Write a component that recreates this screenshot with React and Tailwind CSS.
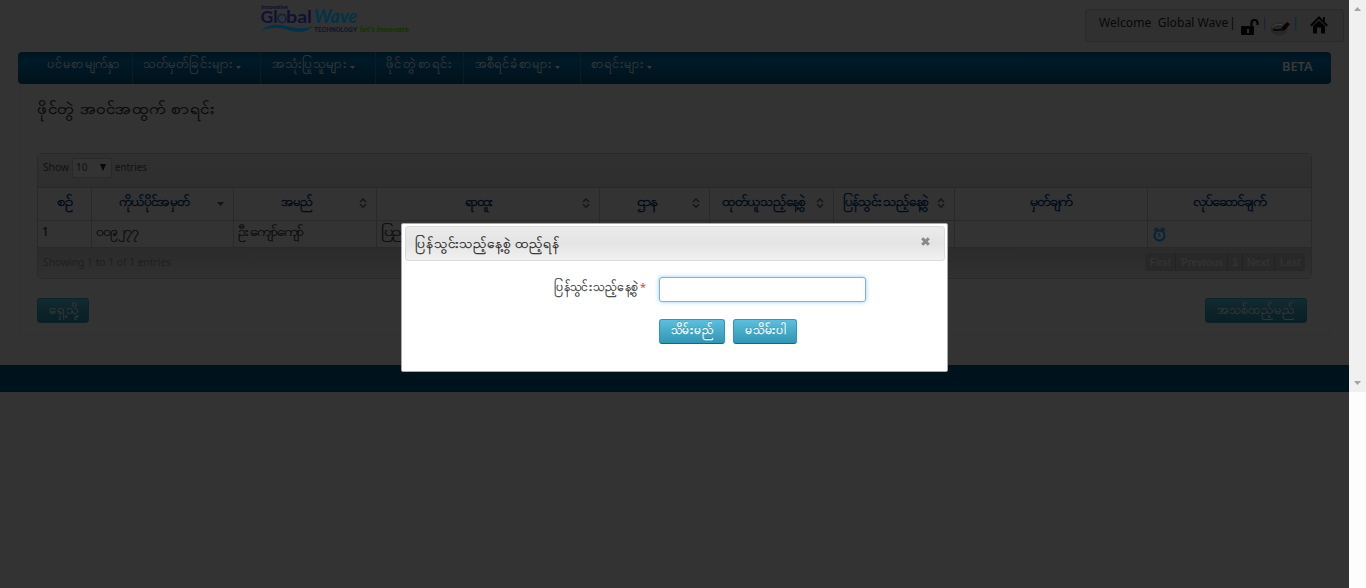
import React from "react";

function My({ w, className = "", children }) {
  const ref = React.useRef(null);
  const [s, setS] = React.useState(1);
  React.useLayoutEffect(() => {
    if (ref.current.offsetWidth) setS(w / ref.current.offsetWidth);
  }, [w]);
  return (
    <span className={"inline-block whitespace-nowrap text-left " + className} style={{ width: w }}>
      <span ref={ref} className="inline-block origin-left" style={{ transform: `scaleX(${s})` }}>
        {children}
      </span>
    </span>
  );
}

const menu = [
  { label: "ပင်မစာမျက်နှာ", cell: "w-[115px] pl-[29px]", w: 73 },
  { label: "သတ်မှတ်ခြင်းများ", cell: "w-[128px] pl-[10px]", w: 90, caret: true },
  { label: "အသုံးပြုသူများ", cell: "w-[115px] pl-[11px]", w: 75, caret: true },
  { label: "ဖိုင်တွဲ စာရင်း", cell: "w-[88px] pl-[10px]", w: 66 },
  { label: "အစီရင်ခံစာများ", cell: "w-[117px] pl-[11px]", w: 77, caret: true },
  { label: "စာရင်းများ", cell: "pl-[10px]", w: 53, caret: true },
];

const columns = [
  { label: "စဉ်", w: 15 },
  { label: "ကိုယ်ပိုင်အမှတ်", w: 70, sort: "down" },
  { label: "အမည်", w: 31, sort: "both" },
  { label: "ရာထူး", w: 29, sort: "both" },
  { label: "ဌာန", w: 19, sort: "both" },
  { label: "ထုတ်ယူသည့်နေ့စွဲ", w: 83, sort: "both" },
  { label: "ပြန်သွင်းသည့်နေ့စွဲ", w: 85, sort: "both" },
  { label: "မှတ်ချက်", w: 42 },
  { label: "လုပ်ဆောင်ချက်", w: 73 },
];

const grid = "grid grid-cols-[54px_142px_143px_223px_110px_124px_121px_193px_1fr]";

function SortIcon({ kind }) {
  if (kind === "down")
    return (
      <svg className="w-[7px] h-[4px] mt-[4px]" viewBox="0 0 7 4"><path d="M0 0h7L3.5 4z" fill="#131313" /></svg>
    );
  return (
    <svg className="w-[8px] h-[10px]" viewBox="0 0 8 10" fill="none" stroke="#171717" strokeWidth="1.5">
      <path d="M1 4L4 1l3 3M1 6.200l3 3 3-3" />
    </svg>
  );
}

function Logo() {
  return (
    <svg className="w-[160px] h-[34px] ml-[255px]" viewBox="0 0 160 34">
      <text x="6" y="9" fontSize="5" fontWeight="700" fontFamily="Roboto, sans-serif" fill="#10102c" textLength="27" lengthAdjust="spacingAndGlyphs">Innovative</text>
      <g fontFamily="Lato, sans-serif" fontWeight="700" fontSize="17" fill="#101033">
        <text x="5.500" y="23" textLength="17" lengthAdjust="spacingAndGlyphs">Gl</text>
        <text x="31" y="23" textLength="26" lengthAdjust="spacingAndGlyphs">bal</text>
      </g>
      <circle cx="27" cy="18.500" r="4" fill="none" stroke="#17203c" strokeWidth="1.800" />
      <path d="M28 15c-3 2-1 5 0 7" stroke="#104058" fill="none" />
      <text x="59" y="23" fontFamily="Lato, sans-serif" fontWeight="700" fontStyle="italic" fontSize="18" fill="#003349" textLength="43" lengthAdjust="spacingAndGlyphs">Wave</text>
      <path d="M6 31C16 22 26 25 36 27S53 29 58 25C54 33 42 33 33 30S15 27 6 31z" fill="#003349" />
      <text x="59" y="31.500" fontFamily="Roboto, sans-serif" fontWeight="500" fontSize="6.500" fill="#10102c" textLength="43" lengthAdjust="spacingAndGlyphs">TECHNOLOGY</text>
      <text x="105" y="31.500" fontFamily="Lato, sans-serif" fontWeight="900" fontStyle="italic" fontSize="7.500" fill="#153300" textLength="49" lengthAdjust="spacingAndGlyphs">let’s innovate</text>
    </svg>
  );
}

function Header() {
  return (
    <header className="flex h-[52px] justify-between">
      <Logo />
      <div className="mt-[9px] mr-[5px] flex h-[33px] w-[259px] rounded-[3px] border border-[#2a2a2a] bg-[#303030] pl-[13px] text-[12.5px] leading-[26px] text-[#080808]">
        <My w={129}>Welcome&nbsp; Global Wave</My>
        <span className="ml-[1px] w-[7px]">|</span>
        <svg className="mt-[8px] ml-[4px] h-[18px] w-[19px] shrink-0" viewBox="0 0 19 18">
          <path d="M11.500 9V5a3 3 0 0 1 6 0v2" fill="none" stroke="#030303" strokeWidth="2.200" />
          <rect x="1" y="8" width="13" height="9" rx="1" fill="#030303" />
          <path d="M7 11h2v4H7z" fill="#303030" />
        </svg>
        <span className="ml-[2px] w-[6px] text-[#17203a]">|</span>
        <svg className="mt-[9px] ml-[3px] h-[18px] w-[20px] shrink-0" viewBox="0 0 20 18">
          <ellipse cx="9" cy="10" rx="8.500" ry="6.500" fill="#272727" />
          <path d="M2 8q6-5 12-1" stroke="#444" fill="none" />
          <path d="M3 10.500c3 1 5 1 8 0" fill="none" stroke="#050505" strokeWidth="1.800" />
          <path d="M11 12l1-4 5-5 3 2-5 6z" fill="#050505" />
        </svg>
        <span className="ml-[2px] w-[6px] text-[#002c40]">|</span>
        <svg className="mt-[6px] ml-[12px] h-[18px] w-[18px] shrink-0" viewBox="0 0 18 18">
          <path d="M9 0l4 4V1h2v5l3 3-1.500 1.500L9 3 1.500 10.500 0 9z" fill="#030303" />
          <path d="M9 4.500l6 5.500v7.500h-4v-6H7v6H3V10z" fill="#030303" />
        </svg>
      </div>
    </header>
  );
}

function Nav() {
  return (
    <nav className="ml-[18px] flex h-[32px] w-[1313px] rounded-[4px] bg-linear-to-b from-[#00141f] via-[#001a27] via-30% to-[#00121b] text-[12.500px] text-[#383838] [-webkit-text-stroke:0.2px_#383838]">
      {menu.map((m, i) => (
        <div key={m.label} className={"flex h-8 leading-[24px] " + m.cell + (i < 5 ? " border-r border-[#0d1c20]" : "")}>
          <My w={m.w}>{m.label}</My>
          {m.caret && <svg className="mt-[14px] ml-[3px] h-[3px] w-[5px]" viewBox="0 0 5 3"><path d="M0 0h5L2.500 3z" fill="#383838" /></svg>}
        </div>
      ))}
      <span className="mt-[2px] mr-[18px] ml-auto text-[12px] leading-[26px] font-semibold [-webkit-text-stroke:0]"><My w={31}>BETA</My></span>
    </nav>
  );
}

function DataTable() {
  return (
    <div className="mt-[32px] w-[1275px] rounded-[5px] border border-[#292929] text-[12px] text-[#0a0a0a]">
      <div className="flex h-[33px] items-center bg-linear-to-b from-[#303030] to-[#2e2e2e] pl-[5px] text-[11px] text-[#111]">
        <My w={26} className="-mt-[7px]">Show</My>
        <span className="-mt-[6px] ml-[3px] mr-[3px] flex h-[20px] w-[40px] items-center rounded-[2px] border border-[#292929] bg-[#333] pl-[3px] pb-px text-[10px]">
          10
          <svg className="ml-[13px] h-[7px] w-[6px]" viewBox="0 0 6 7"><path d="M0 0h6L3 7z" fill="#080808" /></svg>
        </span>
        <My w={32} className="-mt-[7px]">entries</My>
      </div>
      <div className={grid + " h-[33px] border-t border-[#282828] font-bold text-[#000b1a]"}>
        {columns.map((c, i) => (
          <div key={c.label} className={"flex border-[#292929] leading-[27px] " + (i < 8 ? "border-r" : "")}>
            <div className="flex-1 text-center"><My w={c.w}>{c.label}</My></div>
            {c.sort && <div className="mt-[10px] mr-[9px] flex w-[8px] justify-center"><SortIcon kind={c.sort} /></div>}
          </div>
        ))}
      </div>
      <div className={grid + " h-[28px] border-y border-[#292929] leading-[21px] [-webkit-text-stroke:0.2px_#0a0a0a]"}>
        {["1", "၀၀၉၂၇၇", "ဦးကျော်ကျော်", "ပြည်", "", "", "", "", ""].map((t, i) => (
          <div key={i} className={"overflow-hidden border-[#292929] pl-[4px] " + (i < 8 ? "border-r" : "")}>
            {i === 0 ? t : t && <My w={[0, 42, 65, 27][i]}>{t}</My>}
            {i === 8 && (
              <svg className="mt-[6px] ml-px h-[15px] w-[13px]" viewBox="0 0 13 15">
                <path d="M1 3.500l2-2 2 1M12 3.500l-2-2-2 1" stroke="#0c2434" strokeWidth="2" fill="none" />
                <circle cx="6.500" cy="8.500" r="5" fill="#303638" stroke="#062238" strokeWidth="2" />
                <path d="M6 6v2.500l1.500 1.500" stroke="#151515" fill="none" />
              </svg>
            )}
          </div>
        ))}
      </div>
      <div className="flex h-[30px] justify-between rounded-b-[5px] bg-linear-to-b from-[#2b2b2b] to-[#303030] pl-[5px] text-[11px] text-[#1f1f1f]">
        <My w={128} className="leading-[28px]">Showing 1 to 1 of 1 entries</My>
        <div className="mt-[5px] mr-[6px] flex h-[18px] overflow-hidden rounded-[4px] bg-[#282828] font-['Liberation_Sans',sans-serif] leading-[18px] font-bold text-[#333]">
          <span className="w-[31px] border-r border-[#222] text-center"><My w={21}>First</My></span>
          <span className="w-[52px] border-r border-[#222] text-center"><My w={42}>Previous</My></span>
          <span className="w-[15px] border-r border-[#222] text-center">1</span>
          <span className="w-[32px] border-r border-[#222] text-center"><My w={23}>Next</My></span>
          <span className="w-[30px] text-center"><My w={21}>Last</My></span>
        </div>
      </div>
    </div>
  );
}

function DimButton({ children, className }) {
  return (
    <button className={"flex h-[25px] justify-center rounded-[3px] border border-[#0a2229] bg-linear-to-b from-[#122a31] to-[#091e25] text-[12.500px] leading-[22px] text-[#383838] [-webkit-text-stroke:0.2px_#383838] " + className}>
      {children}
    </button>
  );
}

function ModalButton({ children, className }) {
  return (
    <button className={"flex h-[25px] justify-center rounded-[3px] border border-[#2f96b4] border-b-[#1f6377] bg-linear-to-b from-[#5bc0de] to-[#2f96b4] text-[12.500px] leading-[20px] text-white [-webkit-text-stroke:0.3px_white] [text-shadow:0_-1px_0_rgba(0,0,0,.25)] " + className}>
      {children}
    </button>
  );
}

function Modal() {
  return (
    <div className="fixed top-[223px] left-[401px] h-[149px] w-[547px] rounded-[2px] border border-[#a7a7ad] bg-white pt-[2px] pr-[2px] pl-[3px]">
      <div className="flex h-[35px] justify-between rounded-[3px] border border-[#dadada] bg-linear-to-b from-[#ebebeb] from-0% via-[#e4e4e4] via-50% to-[#f1f1f1] pl-[9px] text-[14px] leading-[32px] text-[#222] [-webkit-text-stroke:0.25px_#222]">
        <My w={145}>ပြန်သွင်းသည့်နေ့စွဲ ထည့်ရန်</My>
        <svg className="mt-[10px] mr-[14px] h-[9px] w-[9px]" viewBox="0 0 9 9"><path d="M1.200 1.200l6.600 6.600M7.800 1.200l-6.600 6.600" stroke="#888" strokeWidth="3" /></svg>
      </div>
      <div className="mt-[16px] ml-[149px] flex text-[12.500px] text-[#333]">
        <My w={84} className="leading-[20px] [-webkit-text-stroke:0.25px_#333]">ပြန်သွင်းသည့်နေ့စွဲ</My>
        <span className="ml-[2px] w-[19px] text-[11px] leading-[20px] text-[#f33]">*</span>
        <input className="h-[25px] w-[207px] rounded-[3px] border border-[#75b5e8] bg-white shadow-[0_0_4px_rgba(82,168,236,.6)] outline-none" />
      </div>
      <div className="mt-[17px] ml-[254px] flex gap-[8px]">
        <ModalButton className="w-[66px]"><My w={43}>သိမ်းမည်</My></ModalButton>
        <ModalButton className="w-[64px]"><My w={41}>မသိမ်းပါ</My></ModalButton>
      </div>
    </div>
  );
}

export default function App() {
  return (
    <div className="flex h-[588px] w-[1366px] overflow-hidden bg-[#fdfdfd] font-['Noto_Sans','Open_Sans',sans-serif]">
      <div className="h-[588px] w-[1349px] bg-[#333]">
        <Header />
        <Nav />
        <main className="ml-[20px] h-[252px] w-[1310px] border border-t-0 border-[#313131] pl-[16px]">
          <h1 className="h-[37px] pt-[11px] text-[16px] leading-[26px] text-[#080808] [-webkit-text-stroke:0.25px_#080808]"><My w={177}>ဖိုင်တွဲ အဝင်အထွက် စာရင်း</My></h1>
          <DataTable />
          <div className="mt-[19px] mr-[22px] flex justify-between">
            <DimButton className="w-[52px]"><My w={29}>ရှေ့သို့</My></DimButton>
            <DimButton className="w-[102px]"><My w={78}>အသစ်ထည့်မည်</My></DimButton>
          </div>
        </main>
        <footer className="mt-[29px] h-[27px] bg-[#00131d]" />
      </div>
      <div className="flex h-[392px] w-[17px] flex-col items-center justify-between bg-[#f0f0f0] py-[7px]">
        <svg className="h-[4px] w-[7px]" viewBox="0 0 7 4"><path d="M0 4h7L3.500 0z" fill="#a3a3a3" /></svg>
        <svg className="h-[4px] w-[7px]" viewBox="0 0 7 4"><path d="M0 0h7L3.500 4z" fill="#a3a3a3" /></svg>
      </div>
      <Modal />
    </div>
  );
}
